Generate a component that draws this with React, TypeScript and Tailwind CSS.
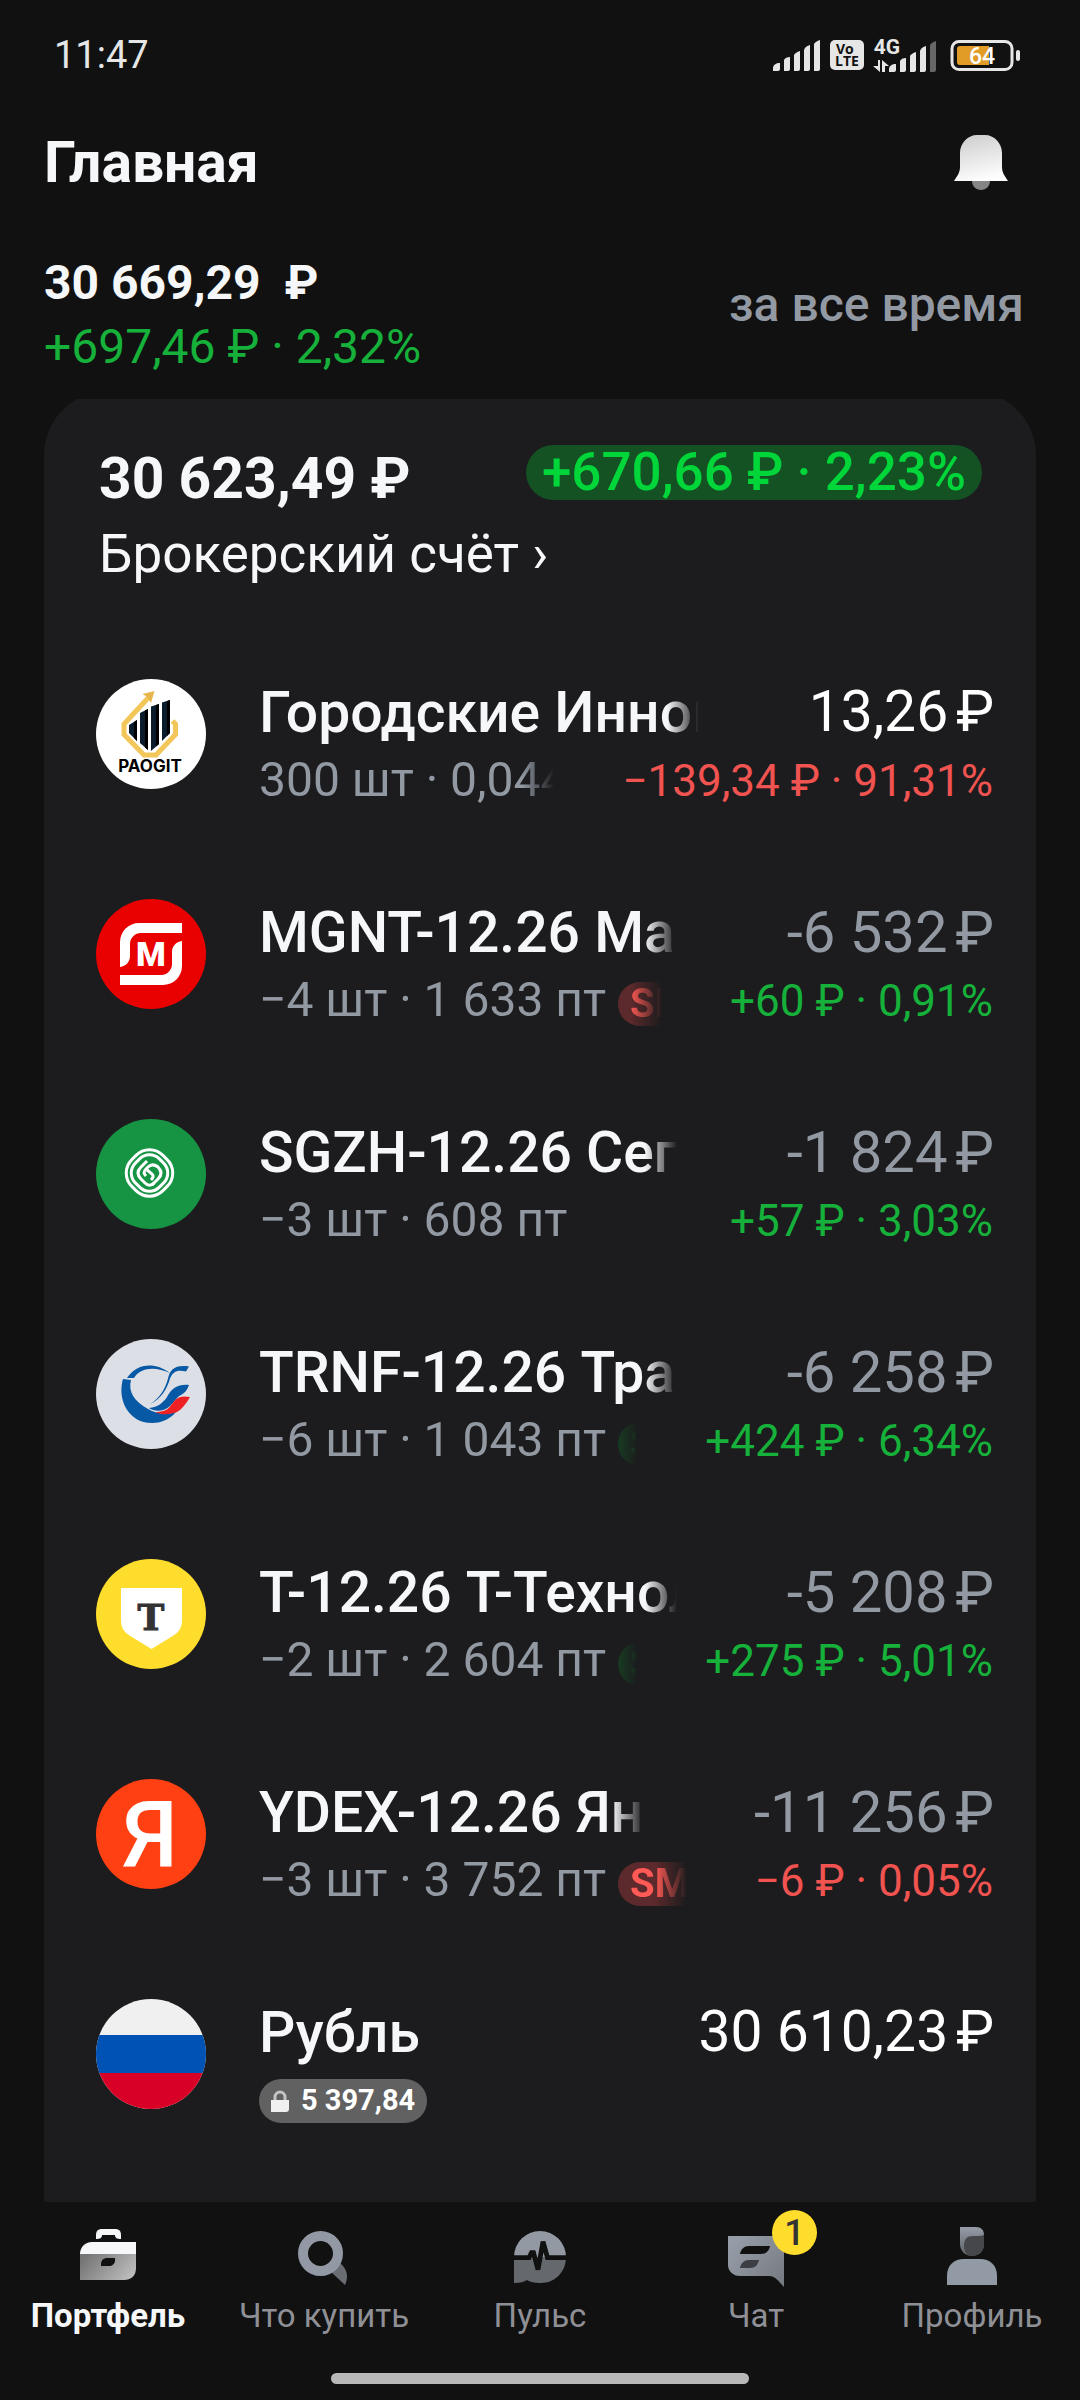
import type { ReactNode } from 'react';

type Tone = 'up' | 'down';

type Position = {
  name: string;
  details?: string;
  badge?: Tone;
  locked?: string;
  amount: string;
  muted?: boolean;
  change?: string;
  tone?: Tone;
  logo: ReactNode;
};

const FADE = '[mask-image:linear-gradient(to_right,black_calc(100%-32px),transparent)]';

const PaogitLogo = () => (
  <svg viewBox="0 0 110 110" className="size-full">
    <rect width="110" height="110" fill="#fff" />
    <path d="M53 18 28 45v10.500L48 76h12l19.500-20.500V45l-3-3" fill="none" stroke="#f2c659" strokeWidth="5" />
    <path d="m58.500 12-12 3 4 2.500 1.500 1.500 3 5z" fill="#e8b64a" />
    <g fill="#0b1c2c">
      <path d="m33 46 8-5v21l-8-8z" />
      <path d="m44 34 8-4v41l-8-7z" />
      <path d="m55 27.500 8-2.500v40l-8 7z" />
      <path d="m66 23.500 8-2.500v33l-8 8z" />
    </g>
    <g fill="#000">
      <path d="m38 43 3-2v21l-3-3zM49 31.500l3-1.500v41l-3-2.500zM60 26l3-1v40l-3 2.500zM71 22l3-1v33l-3 3z" />
    </g>
    <text x="54" y="93" textAnchor="middle" className="font-[Inter] text-[17px] font-bold">
      PAOGIT
    </text>
  </svg>
);

const MagnitLogo = () => (
  <svg viewBox="0 0 110 110" className="size-full">
    <rect width="110" height="110" fill="#e90000" />
    <path d="M86 24H43a19 19 0 0 0-19 19v25c6-1 10-5 10-11V45a11 11 0 0 1 11-11h41z" fill="#fff" />
    <path d="M24 86h43a19 19 0 0 0 19-19V42c-6 1-10 5-10 11v12a11 11 0 0 1-11 11H24z" fill="#fff" />
    <text x="55" y="67" textAnchor="middle" fill="#fff" className="text-[34px] font-black">
      M
    </text>
  </svg>
);

const SegezhaLogo = () => (
  <svg viewBox="0 0 110 110" className="size-full">
    <rect width="110" height="110" fill="#169444" />
    <g fill="none" stroke="#fff" strokeWidth="3">
      <rect x="31.500" y="32" width="44" height="44" rx="19" transform="rotate(45 53.500 54)" />
      <rect x="36.500" y="37" width="34" height="34" rx="14" transform="rotate(45 53.500 54)" />
      <path d="m51 42-6 6c-4 4-4 8 0 12l4 4c3 3 6 3 9 0" />
      <path d="m56 66 6-6c4-4 4-8 0-12-4-3-7-3-10 0l-2 2c-3 3-2 5 0 7" />
      <path d="m50 50 6 5c2 2 1 4-1 6" />
    </g>
  </svg>
);

const TransneftLogo = () => (
  <svg viewBox="0 0 110 110" className="size-full">
    <rect width="110" height="110" fill="#dcdfe6" />
    <g fill="#0759a5">
      <path d="M27 40C21 60 32 84 56 84c11 0 19-5 24-11-9 3-20 2-28-3-14-8-20-17-17-29z" />
      <path d="M31 39C40 25 58 22 74 34c-13-6-29-7-36 5z" />
      <path d="M93 27.500c-14-2-19 3-21 12-3 11-8 19-18 26 11-6 17-15 20-26 3-7 7-9 16-7z" />
      <path d="M93 46c-11-1-17 3-22 12-4 6-9 10-18 11 6 4 14 4 21-2 5-5 7-9 11-11 4-2 6-5 8-10z" />
    </g>
    <path d="M94 58c-10-2-14 1-18 7s-8 8-17 8c8 4 17 2 22 0 5-3 9-8 13-15z" fill="#ed2024" />
  </svg>
);

const TTechLogo = () => (
  <svg viewBox="0 0 110 110" className="size-full">
    <rect width="110" height="110" fill="#ffdd2d" />
    <path d="M25 29h61v32c0 9-4 13-11 17L55.500 90 36 78c-7-4-11-8-11-17z" fill="#fff" />
    <text x="55" y="71" textAnchor="middle" fill="#333" stroke="#333" className="font-['DejaVu_Serif'] text-[36px] font-bold">
      T
    </text>
  </svg>
);

const YandexLogo = () => (
  <svg viewBox="0 0 110 110" className="size-full">
    <rect width="110" height="110" fill="#ff4013" />
    <text x="54" y="87" textAnchor="middle" fill="#fff" className="text-[91px] font-medium">
      Я
    </text>
  </svg>
);

const RubleLogo = () => (
  <svg viewBox="0 0 110 110" className="size-full">
    <rect width="110" height="110" fill="#f0f0f0" />
    <rect y="36" width="110" height="38" fill="#0052b4" />
    <rect y="74" width="110" height="36" fill="#d80027" />
  </svg>
);

const positions: Position[] = [
  { name: 'Городские Инновации', details: '300 шт · 0,0442 ₽', amount: '13,26', change: '−139,34 ₽ · 91,31%', tone: 'down', logo: <PaogitLogo /> },
  { name: 'MGNT-12.26 Магнит', details: '−4 шт · 1 633 пт', badge: 'down', amount: '-6 532', muted: true, change: '+60 ₽ · 0,91%', tone: 'up', logo: <MagnitLogo /> },
  { name: 'SGZH-12.26 Сегежа', details: '−3 шт · 608 пт', amount: '-1 824', muted: true, change: '+57 ₽ · 3,03%', tone: 'up', logo: <SegezhaLogo /> },
  { name: 'TRNF-12.26 Транснефть', details: '−6 шт · 1 043 пт', badge: 'up', amount: '-6 258', muted: true, change: '+424 ₽ · 6,34%', tone: 'up', logo: <TransneftLogo /> },
  { name: 'T-12.26 Т-Технологии', details: '−2 шт · 2 604 пт', badge: 'up', amount: '-5 208', muted: true, change: '+275 ₽ · 5,01%', tone: 'up', logo: <TTechLogo /> },
  { name: 'YDEX-12.26 Яндекс', details: '−3 шт · 3 752 пт', badge: 'down', amount: '-11 256', muted: true, change: '−6 ₽ · 0,05%', tone: 'down', logo: <YandexLogo /> },
  { name: 'Рубль', locked: '5 397,84', amount: '30 610,23', logo: <RubleLogo /> },
];

const SignalBars = ({ weak = false }: { weak?: boolean }) => (
  <svg viewBox="0 0 48 31" className="h-[31px] w-12" fill="#e6e6e6">
    <path d="M0 31v-3c0-3 3-5 7-5v6c0 1-1 2-2 2z" />
    <path d="M11 31V20c1-2 3-3 6-3v12c0 1-1 2-2 2z" />
    <path d="M21 31V15c1-2 3-3 6-4v18c0 1-1 2-2 2z" />
    <path d="M31 31V10c1-3 3-4 6-5v24c0 1-1 2-2 2z" />
    <path d="M41 31V4c1-2 3-3 6-4v29c0 1-1 2-2 2z" fill={weak ? '#666' : '#e6e6e6'} />
  </svg>
);

const StatusBar = () => (
  <div className="flex h-[110px] items-center justify-between pr-[60px] pl-[54px]">
    <span className="text-[38px] text-[#e6e6e6]">11:47</span>
    <div className="flex items-center gap-[9px]">
      <SignalBars />
      <div className="flex h-[30px] w-[34px] flex-col items-center justify-center rounded-[5px] bg-[#e6e6e6] font-['Open_Sans'] text-[14px] leading-[12px] font-bold text-[#111]">
        <span className="self-start pl-[6px]">Vo</span>
        <span>LTE</span>
      </div>
      <div className="flex items-end">
        <div className="-mr-[12px] flex flex-col items-center">
          <span className="text-[21px] leading-[18px] font-bold text-[#e6e6e6]">4G</span>
          <svg viewBox="0 0 16 12" className="mt-1 mr-3 h-3 w-4" fill="#e6e6e6">
            <path d="M5 0h2v12L0 6h5zM9 0l7 6h-4v6H9z" />
          </svg>
        </div>
        <SignalBars weak />
      </div>
      <svg viewBox="0 0 70 31" className="ml-1 h-[31px] w-[70px]">
        <rect x="2" y="1.500" width="60" height="28" rx="7" fill="none" stroke="#e6e6e6" strokeWidth="3" />
        <path d="M10 6h29v19H10c-2 0-3-1-3-3V9c0-2 1-3 3-3z" fill="#e09c27" />
        <rect x="66" y="10" width="4" height="11" rx="2" fill="#e6e6e6" />
        <text x="32" y="24" textAnchor="middle" fill="#fff" className="text-[23px] font-medium">
          64
        </text>
      </svg>
    </div>
  </div>
);

const BellIcon = () => (
  <svg viewBox="0 0 56 56" className="size-14">
    <defs>
      <linearGradient id="bell" x1="0.300" y1="0" x2="0.600" y2="1">
        <stop stopColor="#cfcfcf" />
        <stop offset="1" stopColor="#fff" />
      </linearGradient>
    </defs>
    <path d="M19 46h18c0 5-4 9-9 9s-9-4-9-9z" fill="#858585" />
    <path d="M24 0h8c9 0 17 8 17 18v14c0 6 3 9 6 14H1c3-5 6-8 6-14V18C7 8 15 0 24 0z" fill="url(#bell)" />
  </svg>
);

const Amount = ({ value, muted }: { value: string; muted?: boolean }) => (
  <span className={`flex gap-2 leading-[66px] whitespace-nowrap ${muted ? 'text-[58px] text-[#9299a2]' : 'text-[57px] text-white'}`}>
    <span>{value}</span>
    <span>₽</span>
  </span>
);

const PositionRow = ({ name, details, badge, locked, amount, muted, change, tone, logo }: Position) => (
  <li className="flex h-[220px] gap-[53px] pt-[54px]">
    <div className="size-[110px] shrink-0 overflow-hidden rounded-full">{logo}</div>
    <div className="min-w-0 flex-1">
      <div className="flex justify-between gap-[110px]">
        <h3 className={`min-w-0 overflow-hidden text-[57px] leading-[68px] font-medium whitespace-nowrap ${locked ? '' : FADE}`}>{name}</h3>
        <Amount value={amount} muted={muted} />
      </div>
      {details && (
        <div className="flex justify-between gap-[68px] pr-px">
          <div className={`flex min-w-0 items-center gap-3 overflow-hidden text-[48px] leading-[64px] whitespace-nowrap text-[#9299a2] ${tone ? FADE : ''}`}>
            <span>{details}</span>
            {badge && (
              <span className={`mt-2 rounded-full px-3 text-[40px] leading-[44px] font-bold ${badge === 'down' ? 'bg-[#5c2a2c] text-[#ff5a55]' : 'bg-[#145224] text-[#00d639]'}`}>
                SM
              </span>
            )}
            {!badge && <span className="w-8" />}
          </div>
          <span className={`pt-[2px] text-[44px] leading-[64px] whitespace-nowrap ${tone === 'up' ? 'text-[#16b13a]' : 'text-[#f05350]'}`}>{change}</span>
        </div>
      )}
      {locked && (
        <span className="mt-3 flex h-11 w-fit items-center gap-3 rounded-full bg-[#616161] px-3 text-[29px] font-bold text-white">
          <svg viewBox="0 0 18 22" className="h-[22px] w-[18px]">
            <path d="M4 11V7a5 5 0 0 1 10 0v4" fill="none" stroke="#c4c4c4" strokeWidth="3" />
            <path d="M0 10h18v9a3 3 0 0 1-3 3H0z" fill="#f0f0f0" />
          </svg>
          {locked}
        </span>
      )}
    </div>
  </li>
);

const PortfolioIcon = () => (
  <svg viewBox="0 0 56 56" className="size-14 overflow-visible">
    <defs>
      <linearGradient id="case" x1="0" y1="0.300" x2="1" y2="0.700">
        <stop stopColor="#757575" />
        <stop offset="1" stopColor="#bdbdbd" />
      </linearGradient>
    </defs>
    <path d="M16 13V9c0-4 2-6 6-6h13c4 0 6 2 6 6v4c-4 0-6-1-6-4H22c0 3-2 4-6 4z" fill="#f6f7f8" />
    <path d="M0 28c0-7 5-12 12-12h44v12z" fill="#f6f7f8" />
    <path d="M0 28h56v14c0 8-5 12-12 12H0z" fill="url(#case)" />
    <path d="M21 40v-2c0-4 3-6 6-6h8v2c0 4-3 6-6 6z" fill="#111" />
  </svg>
);

const SearchIcon = () => (
  <svg viewBox="0 0 56 56" className="size-14 overflow-visible">
    <path d="m35 46 9-9c7 6 9 13 5 22z" fill="#6a6d73" />
    <circle cx="24.500" cy="27.500" r="17.500" fill="none" stroke="#9299a5" strokeWidth="10" />
  </svg>
);

const PulseIcon = () => (
  <svg viewBox="0 0 56 56" className="size-14 overflow-visible">
    <path d="M2 31a26 26 0 0 1 52 0z" fill="#9299a2" />
    <path d="M2 31h52c0 15-11 26-25 26-7 0-11-1-14-3-3 2-7 3-13 3z" fill="#65686c" />
    <path d="M0 31.700h17l2.500-5h2l4.500 17 5-28 4.500 16H56" fill="none" stroke="#111" strokeWidth="4.800" />
  </svg>
);

const ChatIcon = () => (
  <svg viewBox="0 0 56 56" className="size-14 overflow-visible">
    <defs>
      <linearGradient id="chat" x1="0" y1="0.200" x2="1" y2="1">
        <stop stopColor="#969da8" />
        <stop offset="1" stopColor="#75797f" />
      </linearGradient>
    </defs>
    <path d="M0 10h56v51c-5-5-8-11-15-11H12C5 50 0 45 0 39z" fill="url(#chat)" />
    <path d="M12 28c1-5 4-8 9-8h21c-1 5-4 8-9 8z" fill="#111" />
    <path d="M12 42c1-5 4-8 9-8h10c-1 5-4 8-9 8z" fill="#3c3e44" />
  </svg>
);

const ProfileIcon = () => (
  <svg viewBox="0 0 56 56" className="size-14 overflow-visible">
    <defs>
      <linearGradient id="hair" x1="0.500" y1="0" x2="0.500" y2="1">
        <stop stopColor="#969da8" />
        <stop offset="1" stopColor="#5c5f64" />
      </linearGradient>
    </defs>
    <path d="M16 1h16c5 0 8 3 8 8v9c0 7-5 12-12 12s-12-5-12-12z" fill="url(#hair)" />
    <path d="M40 8v10c0 7-5 12-12 12-5 0-8-5-8-10 0-7 3-10 9-10h6c3 0 5-1 5-2z" fill="#45474a" />
    <path d="M3 59V50c0-11 7-17 17-17h16c10 0 17 6 17 17v9z" fill="#929aa5" />
  </svg>
);

const tabs = [
  { label: 'Портфель', icon: <PortfolioIcon />, active: true },
  { label: 'Что купить', icon: <SearchIcon /> },
  { label: 'Пульс', icon: <PulseIcon /> },
  { label: 'Чат', icon: <ChatIcon />, count: 1 },
  { label: 'Профиль', icon: <ProfileIcon /> },
];

const TabBar = () => (
  <footer className="pb-4">
    <nav className="flex pt-6">
      {tabs.map(({ label, icon, active, count }) => (
        <a key={label} href="#" className={`flex flex-1 flex-col items-center gap-3 text-[33px] leading-[44px] whitespace-nowrap ${active ? 'font-bold text-[#f6f7f8]' : 'text-[#8f9096]'}`}>
          <span className="relative">
            {icon}
            {count && (
              <span className="absolute -top-4 left-11 flex size-[45px] items-center justify-center rounded-full bg-[#ffdd2d] text-[36px] font-medium text-[#333]">
                {count}
              </span>
            )}
          </span>
          {label}
        </a>
      ))}
    </nav>
    {/* Home indicator */}
    <div className="mx-auto mt-[35px] h-[11px] w-[418px] max-w-full rounded-full bg-[#b8b8b8]" />
  </footer>
);

export default function App() {
  return (
    <div className="flex min-h-screen flex-col bg-[#111] font-[Roboto,sans-serif] text-[#f6f7f8]">
      <StatusBar />

      <header className="flex h-[105px] items-center justify-between pr-[71px] pl-11">
        <h1 className="text-[57px] font-bold">Главная</h1>
        <button type="button" aria-label="Уведомления">
          <BellIcon />
        </button>
      </header>

      <section className="flex items-center justify-between pt-9 pr-14 pb-5 pl-11 text-[48px] leading-[64px]">
        <div>
          <p className="flex gap-6 font-bold">
            <span>30 669,29</span>
            <span>₽</span>
          </p>
          <p className="text-[#16b13a]">+697,46 ₽ · 2,32%</p>
        </div>
        <button type="button" className="pb-5 font-medium text-[#9299a2]">
          за все время
        </button>
      </section>

      <main className="flex flex-1 flex-col overflow-hidden px-11">
        <section className="-mt-2 flex-1 rounded-t-[64px] bg-[#1c1c1e] pt-[52px] pr-[42px] pl-[52px]">
          <div className="flex items-start justify-between pl-[3px]">
            <h2 className="text-[57px] leading-[72px] font-bold">30 623,49 ₽</h2>
            <span className="mt-[2px] mr-3 rounded-full bg-[#145224] px-4 text-[53px] leading-[55px] font-medium text-[#00d639]">
              +670,66 ₽ · 2,23%
            </span>
          </div>
          <a href="#" className="mt-1 ml-[3px] block w-fit text-[53px] leading-[70px]">
            Брокерский счёт ›
          </a>
          <ul className="pt-9">
            {positions.map((position) => (
              <PositionRow key={position.name} {...position} />
            ))}
          </ul>
        </section>
      </main>

      <TabBar />
    </div>
  );
}
